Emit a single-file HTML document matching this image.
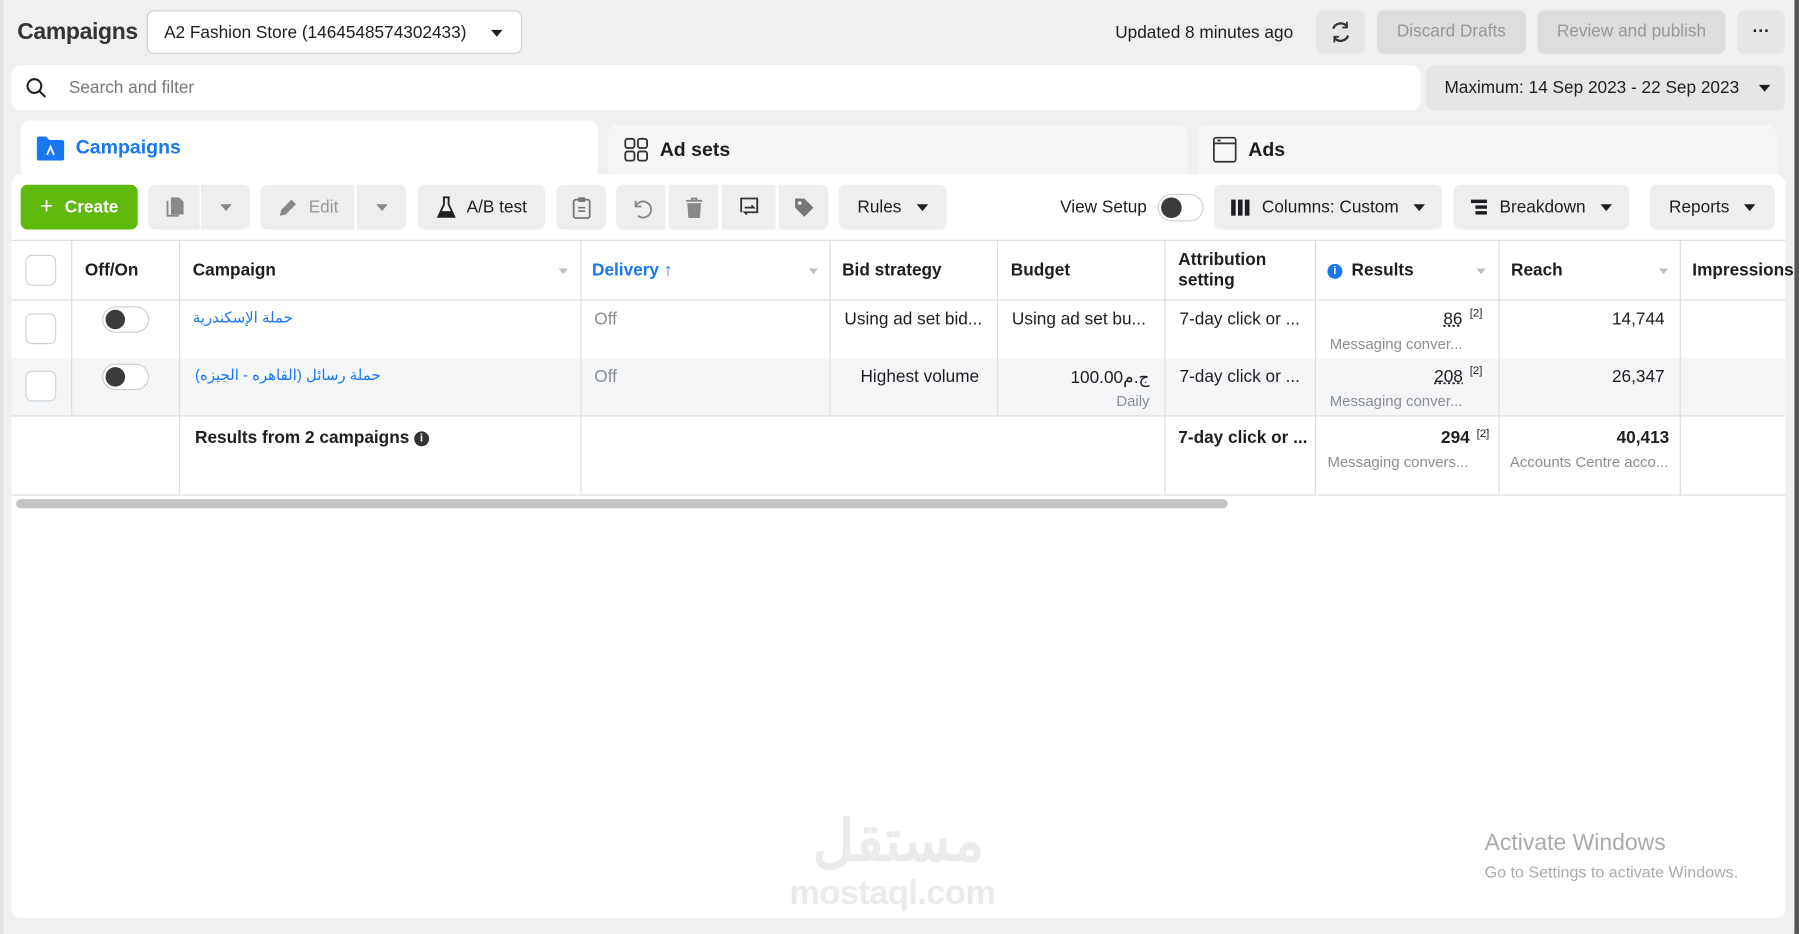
<!DOCTYPE html>
<html><head><meta charset="utf-8"><style>
*{box-sizing:border-box;margin:0;padding:0}
html,body{width:1799px;height:934px;overflow:hidden;background:#f0f0f0}
#s{position:absolute;left:0;top:0;width:1568px;height:814px;transform:scale(1.14732);transform-origin:0 0;font-family:"Liberation Sans","Noto Sans CJK SC",sans-serif;color:#1c1e21;font-size:15px;background:#f0f0f0}
.a{position:absolute}
.btn{position:absolute;background:#eeeeee;border-radius:6px;display:flex;align-items:center;justify-content:center;height:39px;top:161px;color:#1c1e21}
.tri{display:inline-block;width:0;height:0;border-left:5px solid transparent;border-right:5px solid transparent;border-top:6px solid #1c1e21}
.vl{position:absolute;width:1px;background:#ddd}
.hl{position:absolute;height:1px;background:#ddd;left:10px;width:1546px}
.cb{position:absolute;width:27px;height:27px;border:1px solid #ccd0d5;border-radius:6px;background:#fff;left:22px}
.tg{position:absolute;width:41px;height:23px;border:1px solid #ccd0d5;border-radius:12px;background:#fff;left:89px}
.tg:after{content:"";position:absolute;left:2px;top:2px;width:17px;height:17px;border-radius:50%;background:#3a3b3c}
.g{color:#8a8d91}
.sm{font-size:13px;color:#8a8d91}
.sort{position:absolute;width:0;height:0;border-left:4px solid transparent;border-right:4px solid transparent;border-top:5px solid #bcc0c4}
</style></head><body><div id="s">
<div class="a" style="left:0;top:0;width:3px;height:814px;background:#e2e2e2"></div>
<div class="a" style="left:1564px;top:0;width:4px;height:814px;background:#555"></div>
<div class="a" style="left:15px;top:17px;font-size:20px;font-weight:bold;color:#333;letter-spacing:-0.3px">Campaigns</div>
<div class="a" style="left:128px;top:9px;width:327px;height:38px;background:#fff;border:1px solid #ccd0d5;border-radius:6px;padding:10px 0 0 14px;font-size:15px">A2 Fashion Store (1464548574302433)<span class="tri" style="position:absolute;right:16px;top:16px"></span></div>
<div class="a" style="left:972px;top:20px;font-size:15px">Updated 8 minutes ago</div>
<div class="a" style="left:1147px;top:9px;width:43px;height:38px;background:#e6e6e6;border-radius:6px"><svg width="43" height="38"><path d="M27 14a7 7 0 0 0-12 2M16 24a7 7 0 0 0 12-2" stroke="#333" stroke-width="2" fill="none"/><path d="M27 10v5h-4M16 28v-5h4" stroke="#333" stroke-width="1.5" fill="none"/></svg></div>
<div class="a" style="left:1200px;top:9px;width:130px;height:38px;background:#dddddd;border-radius:6px;color:#999;text-align:center;line-height:38px">Discard Drafts</div>
<div class="a" style="left:1340px;top:9px;width:164px;height:38px;background:#dddddd;border-radius:6px;color:#999;text-align:center;line-height:38px">Review and publish</div>
<div class="a" style="left:1514px;top:9px;width:42px;height:38px;background:#e6e6e6;border-radius:6px;text-align:center;line-height:38px;font-weight:bold">···</div>
<div class="a" style="left:10px;top:57px;width:1228px;height:39px;background:#fff;border-radius:8px"><svg class="a" style="left:12px;top:10px" width="20" height="20"><circle cx="8" cy="8" r="6" stroke="#1c1e21" stroke-width="1.8" fill="none"/><path d="M12.5 12.5l5 5" stroke="#1c1e21" stroke-width="1.8"/></svg><span class="a" style="left:50px;top:11px;color:#777">Search and filter</span></div>
<div class="a" style="left:1243px;top:57px;width:313px;height:39px;background:#e6e6e6;border-radius:6px;padding:11px 0 0 16px">Maximum: 14 Sep 2023 - 22 Sep 2023<span class="tri" style="position:absolute;right:13px;top:17px"></span></div>
<div class="a" style="left:530px;top:109px;width:505px;height:50px;background:#f6f6f6;border-radius:8px 8px 0 0"><svg class="a" style="left:14px;top:11px" width="22" height="22" fill="none" stroke="#333" stroke-width="1.6"><rect x="1" y="1" width="8" height="8" rx="2"/><rect x="12" y="1" width="8" height="8" rx="2"/><rect x="1" y="12" width="8" height="8" rx="2"/><rect x="12" y="12" width="8" height="8" rx="2"/></svg><span class="a" style="left:45px;top:12px;font-size:17px;font-weight:bold">Ad sets</span></div>
<div class="a" style="left:1044px;top:109px;width:505px;height:50px;background:#f6f6f6;border-radius:8px 8px 0 0"><svg class="a" style="left:13px;top:10px" width="22" height="24" fill="none" stroke="#333" stroke-width="1.5"><rect x="1" y="1" width="19" height="21" rx="2"/><path d="M1 6h19M4 3.5h3"/></svg><span class="a" style="left:44px;top:12px;font-size:17px;font-weight:bold">Ads</span></div>
<div class="a" style="left:10px;top:152px;width:1546px;height:648px;background:#fff;border-radius:8px"></div>
<div class="a" style="left:18px;top:105px;width:503px;height:55px;background:#fff;border-radius:8px 8px 0 0"><svg class="a" style="left:14px;top:13px" width="24" height="22"><path d="M0 3a2 2 0 0 1 2-2h6l3 3h11a2 2 0 0 1 2 2v14a2 2 0 0 1-2 2H2a2 2 0 0 1-2-2z" fill="#1877f2"/><path d="M9 17l3-7 3 7" stroke="#fff" stroke-width="1.6" fill="none"/></svg><span class="a" style="left:48px;top:14px;font-size:17px;font-weight:bold;color:#1877f2">Campaigns</span></div>
<div class="btn" style="left:18px;width:102px;background:#5fb80c;color:#fff;font-weight:bold"><span style="font-size:20px;margin-right:10px;font-weight:normal">+</span>Create</div>
<div class="btn" style="left:129px;width:45px;border-radius:6px 0 0 6px"><svg width="20" height="20"><path d="M4 4v13h10" stroke="#888" stroke-width="1.6" fill="none"/><path d="M7 1h7l4 4v11H7z" fill="#888"/></svg></div>
<div class="btn" style="left:175px;width:43px;border-radius:0 6px 6px 0"><span class="tri" style="border-top-color:#888"></span></div>
<div class="btn" style="left:227px;width:82px;border-radius:6px 0 0 6px;color:#999"><svg width="20" height="20" style="margin-right:8px"><path d="M3 17l1-5L13 3l4 4-9 9z" fill="#888"/></svg>Edit</div>
<div class="btn" style="left:311px;width:43px;border-radius:0 6px 6px 0"><span class="tri" style="border-top-color:#888"></span></div>
<div class="btn" style="left:364px;width:111px"><svg width="18" height="20" style="margin-right:9px"><path d="M6 1h6M7 1v6L2 18h14L11 7V1" stroke="#1c1e21" stroke-width="1.6" fill="none"/><path d="M4 13h10l2 5H2z" fill="#1c1e21"/></svg>A/B test</div>
<div class="btn" style="left:485px;width:43px"><svg width="16" height="20"><rect x="1" y="3" width="14" height="16" rx="2" stroke="#777" stroke-width="1.6" fill="none"/><rect x="5" y="1" width="6" height="4" fill="#777"/><path d="M5 10h6M5 13h6" stroke="#777" stroke-width="1.4"/></svg></div>
<div class="btn" style="left:537px;width:43px;border-radius:6px 0 0 6px"><svg width="20" height="20"><path d="M5 4v5h5" stroke="#888" stroke-width="1.6" fill="none"/><path d="M5 9a7 7 0 1 1 2 8" stroke="#888" stroke-width="1.6" fill="none"/></svg></div>
<div class="btn" style="left:583px;width:43px;border-radius:0"><svg width="18" height="20"><path d="M2 4h14M7 4V2h4v2" stroke="#888" stroke-width="1.6" fill="none"/><path d="M3 6h12l-1 13H4z" fill="#888"/></svg></div>
<div class="btn" style="left:629px;width:47px;border-radius:0"><svg width="20" height="20"><path d="M3 14V2h14v12h-4" stroke="#333" stroke-width="1.6" fill="none"/><path d="M6 10h8l-2-2M14 14H6l2 2" stroke="#333" stroke-width="1.5" fill="none"/></svg></div>
<div class="btn" style="left:679px;width:43px;border-radius:0 6px 6px 0"><svg width="20" height="20"><path d="M2 2h8l8 8-8 8-8-8z" fill="#777"/><circle cx="6" cy="6" r="1.6" fill="#eee"/></svg></div>
<div class="btn" style="left:731px;width:94px">Rules<span class="tri" style="margin-left:13px"></span></div>
<div class="a" style="left:924px;top:172px">View Setup</div>
<div class="a" style="left:1009px;top:169px;width:40px;height:24px;border:1px solid #ccd0d5;border-radius:12px"><div class="a" style="left:2px;top:2px;width:18px;height:18px;border-radius:50%;background:#3a3b3c"></div></div>
<div class="btn" style="left:1058px;width:199px"><svg width="18" height="16" style="margin-right:9px"><rect x="0" y="1" width="4" height="14" fill="#1c1e21"/><rect x="6" y="1" width="4" height="14" fill="#1c1e21"/><rect x="12" y="1" width="4" height="14" fill="#1c1e21"/></svg>Columns: Custom<span class="tri" style="margin-left:13px"></span></div>
<div class="btn" style="left:1267px;width:153px"><svg width="16" height="16" style="margin-right:9px"><rect x="0" y="1" width="14" height="3" fill="#1c1e21"/><rect x="4" y="6" width="10" height="3" fill="#1c1e21"/><rect x="4" y="11" width="10" height="3" fill="#1c1e21"/></svg>Breakdown<span class="tri" style="margin-left:13px"></span></div>
<div class="btn" style="left:1438px;width:109px">Reports<span class="tri" style="margin-left:13px"></span></div>

<div class="hl" style="top:209px"></div>
<div class="hl" style="top:261px"></div>
<div class="a" style="left:10px;top:312px;width:1546px;height:50px;background:#f5f6f7"></div>
<div class="hl" style="top:362px"></div>
<div class="hl" style="top:431px"></div>
<div class="vl" style="left:62px;top:209px;height:153px"></div>
<div class="vl" style="left:156px;top:209px;height:222px"></div>
<div class="vl" style="left:506px;top:209px;height:222px"></div>
<div class="vl" style="left:723px;top:209px;height:153px"></div>
<div class="vl" style="left:869px;top:209px;height:153px"></div>
<div class="vl" style="left:1015px;top:209px;height:222px"></div>
<div class="vl" style="left:1146px;top:209px;height:222px"></div>
<div class="vl" style="left:1306px;top:209px;height:222px"></div>
<div class="vl" style="left:1464px;top:209px;height:222px"></div>
<div class="cb" style="top:222px"></div>
<div class="a" style="left:74px;top:227px;font-weight:bold">Off/On</div>
<div class="a" style="left:168px;top:227px;font-weight:bold">Campaign</div><div class="sort" style="left:487px;top:234px"></div>
<div class="a" style="left:516px;top:227px;font-weight:bold;color:#1877f2">Delivery ↑</div><div class="sort" style="left:705px;top:234px"></div>
<div class="a" style="left:734px;top:227px;font-weight:bold">Bid strategy</div>
<div class="a" style="left:881px;top:227px;font-weight:bold">Budget</div>
<div class="a" style="left:1027px;top:218px;font-weight:bold;line-height:18px">Attribution<br>setting</div>
<div class="a" style="left:1157px;top:227px;font-weight:bold"><span style="display:inline-block;width:13px;height:13px;border-radius:50%;background:#1877f2;color:#fff;font-size:10px;text-align:center;line-height:13px;margin-right:8px;vertical-align:1px">i</span>Results</div><div class="sort" style="left:1287px;top:234px"></div>
<div class="a" style="left:1317px;top:227px;font-weight:bold">Reach</div><div class="sort" style="left:1446px;top:234px"></div>
<div class="a" style="left:1475px;top:227px;font-weight:bold;white-space:nowrap">Impressions</div>

<div class="cb" style="top:273px"></div>
<div class="tg" style="top:267px"></div>
<div class="a" style="left:168px;top:269px;color:#1877f2;font-size:13px" dir="rtl">حملة الإسكندرية</div>
<div class="a g" style="left:518px;top:270px">Off</div>
<div class="a" style="left:736px;top:270px">Using ad set bid...</div>
<div class="a" style="left:882px;top:270px">Using ad set bu...</div>
<div class="a" style="left:1028px;top:270px">7-day click or ...</div>
<div class="a" style="left:1258px;top:270px;text-decoration:underline dotted">86</div><div class="a" style="left:1281px;top:268px;font-size:10px">[2]</div>
<div class="a sm" style="left:1159px;top:292px">Messaging conver...</div>
<div class="a" style="left:1405px;top:270px">14,744</div>

<div class="cb" style="top:323px"></div>
<div class="tg" style="top:317px"></div>
<div class="a" style="left:170px;top:319px;color:#1877f2;font-size:13px" dir="rtl">حملة رسائل (القاهره - الجيزه)</div>
<div class="a g" style="left:518px;top:320px">Off</div>
<div class="a" style="left:750px;top:320px">Highest volume</div>
<div class="a" style="left:933px;top:320px">100.00ج.م</div>
<div class="a sm" style="left:973px;top:342px">Daily</div>
<div class="a" style="left:1028px;top:320px">7-day click or ...</div>
<div class="a" style="left:1250px;top:320px;text-decoration:underline dotted">208</div><div class="a" style="left:1281px;top:318px;font-size:10px">[2]</div>
<div class="a sm" style="left:1159px;top:342px">Messaging conver...</div>
<div class="a" style="left:1405px;top:320px">26,347</div>

<div class="a" style="left:170px;top:373px;font-weight:bold">Results from 2 campaigns <span style="display:inline-block;width:13px;height:13px;border-radius:50%;background:#333;color:#fff;font-size:10px;text-align:center;line-height:13px;vertical-align:1px">i</span></div>
<div class="a" style="left:1027px;top:373px;font-weight:bold">7-day click or ...</div>
<div class="a" style="left:1256px;top:373px;font-weight:bold">294</div><div class="a" style="left:1287px;top:373px;font-size:10px">[2]</div>
<div class="a sm" style="left:1157px;top:395px">Messaging convers...</div>
<div class="a" style="left:1409px;top:373px;font-weight:bold">40,413</div>
<div class="a sm" style="left:1316px;top:395px">Accounts Centre acco...</div>
<div class="a" style="left:14px;top:435px;width:1056px;height:8px;background:#c4c4c4;border-radius:4px"></div>

<div class="a" style="left:688px;top:705px;width:190px;text-align:center;font-size:50px;font-weight:bold;color:#ebebeb;line-height:56px" dir="rtl">مستقل</div>
<div class="a" style="left:688px;top:762px;font-size:30px;font-weight:bold;color:#ebebeb;letter-spacing:-0.5px">mostaql.com</div>
<div class="a" style="left:1294px;top:724px;font-size:20px;color:#aaa">Activate Windows</div>
<div class="a" style="left:1294px;top:752px;font-size:14px;color:#aaa">Go to Settings to activate Windows.</div>
</div></body></html>
